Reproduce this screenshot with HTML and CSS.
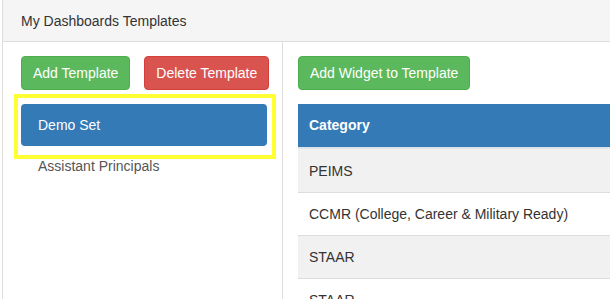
FILE: index.html
```html
<!DOCTYPE html>
<html lang="en">
<head>
<meta charset="UTF-8">
<title>My Dashboards Templates</title>
<link rel="stylesheet" href="styles.css">
</head>
<body>

<div class="panel">
    <div class="panel-heading">My Dashboards Templates</div>
    <div class="panel-body">

        <!-- templates list -->
        <div class="col-left">
            <div class="btn-row">
                <button class="btn btn-success">Add Template</button>
                <button class="btn btn-danger">Delete Template</button>
            </div>
            <div class="list">
                <div class="list-item active">Demo Set</div>
                <div class="list-item">Assistant Principals</div>
            </div>
            <div class="highlight"></div>
        </div>

        <!-- widgets of the template -->
        <div class="col-right">
            <div class="btn-row">
                <button class="btn btn-success">Add Widget to Template</button>
            </div>
            <table class="table">
                <thead>
                    <tr><th>Category</th></tr>
                </thead>
                <tbody>
                    <tr><td>PEIMS</td></tr>
                    <tr><td>CCMR (College, Career &amp; Military Ready)</td></tr>
                    <tr><td>STAAR</td></tr>
                    <tr><td>STAAR</td></tr>
                </tbody>
            </table>
        </div>

    </div>
</div>

</body>
</html>
```

FILE: styles.css
```css
html, body {
    margin: 0;
    padding: 0;
    overflow: hidden;
}

body {
    font-family: "Liberation Sans", Arial, sans-serif;
    font-size: 14px;
    line-height: 20px;
    color: #333;
    background: #fff;
}

.panel {
    width: 900px;
    margin: -1px 0 0 2px;
    border: 1px solid #ddd;
    background: #fff;
}

.panel-heading {
    background: #f5f5f5;
    border-bottom: 1px solid #ddd;
    padding: 11px 18px 10px;
}

.panel-body {
    display: grid;
    grid-template-columns: 280px 1fr;
    min-height: 400px;
}

.col-left {
    position: relative;
    border-right: 1px solid #ddd;
    padding: 14px 12px 0 18px;
}

.col-right {
    padding: 14px 0 0 15px;
}

.btn-row {
    display: flex;
    gap: 14px;
}

.btn {
    flex-shrink: 0;
    white-space: nowrap;
    font-family: inherit;
    font-size: 14px;
    line-height: 20px;
    padding: 6px 11px;
    border: 1px solid transparent;
    border-radius: 4px;
    color: #fff;
    cursor: pointer;
}

.btn-success {
    background: #5cb85c;
    border-color: #4cae4c;
}

.btn-danger {
    background: #d9534f;
    border-color: #d43f3a;
}

.list {
    margin-top: 14px;
}

.list-item {
    padding: 10px 17px;
    color: #555;
}

.list-item.active {
    padding: 11px 17px;
    width: 212px;
    background: #337ab7;
    color: #fff;
    border-radius: 4px;
}

/* yellow marker around the selected template */
.highlight {
    position: absolute;
    left: 11px;
    top: 52px;
    width: 254px;
    height: 57px;
    border: 4px solid #ffff33;
    pointer-events: none;
}

.table {
    width: 100%;
    margin-top: 14px;
    border-collapse: collapse;
}

.table th,
.table td {
    text-align: left;
    padding: 11px 11px;
}

.table th {
    background: #337ab7;
    color: #fff;
    font-weight: bold;
    line-height: 21px;
    border-bottom: 2px solid #dde3ea;
}

.table td {
    border-top: 1px solid #ddd;
}

.table tbody tr:first-child td {
    border-top: 0;
    padding-top: 12px;
}

.table tbody tr:nth-child(odd) {
    background: #f1f1f1;
}
```
